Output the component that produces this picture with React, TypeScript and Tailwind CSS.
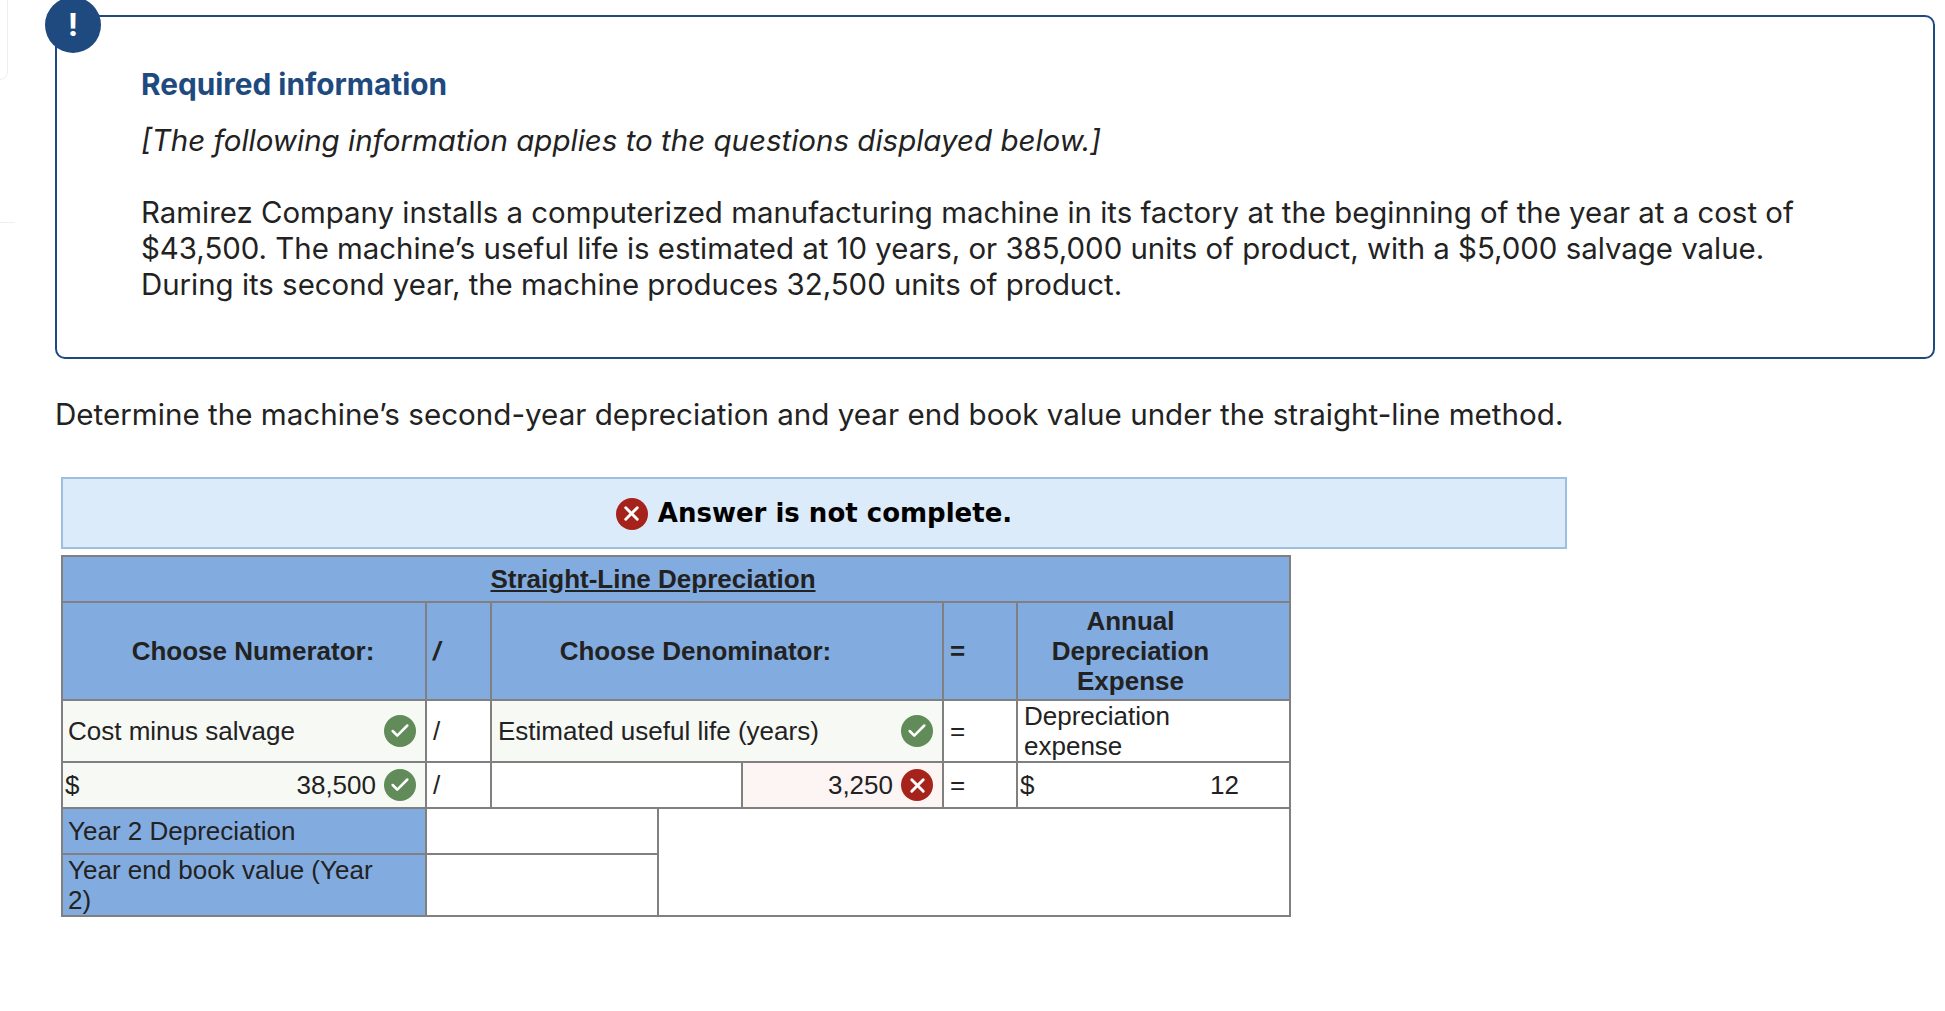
import { Check, X } from "lucide-react";

function Ok() {
  return (
    <span className="flex h-[32px] w-[32px] shrink-0 items-center justify-center rounded-full bg-[#618b58] text-white">
      <Check size={22} strokeWidth={2.75} />
    </span>
  );
}

function Bad() {
  return (
    <span className="flex h-[32px] w-[32px] shrink-0 items-center justify-center rounded-full bg-[#a6231b] text-white">
      <X size={23} strokeWidth={3} />
    </span>
  );
}

const cell = "border-2 border-[#808080] p-0 align-middle";
const blue = "bg-[#82abdf]";

export default function App() {
  return (
    <div className="relative h-[1011px] w-[1945px] overflow-hidden bg-white text-[#222] [font-family:Inter,sans-serif]">
      {/* bits of the page behind, cut off at the left edge */}
      <div className="absolute left-[-10px] top-[-10px] h-[90px] w-[18px] rounded-[8px] border border-[#eeeeee]" />
      <div className="absolute left-0 top-[222px] h-[1px] w-[15px] bg-[#eeeeee]" />

      <div className="pl-[55px] pt-[15px]">
        <div className="relative h-[344px] w-[1880px] rounded-[10px] border-2 border-[#1f4a80] pl-[84px] pt-[49px]">
          <div className="absolute left-[-12px] top-[-20px] flex h-[56px] w-[56px] items-center justify-center rounded-full bg-[#1f4a80] text-[31px] font-bold text-white">
            !
          </div>
          <h2 className="text-[29.8px] font-bold leading-[36px] text-[#1f4a80]">Required information</h2>
          <p className="mt-[20px] text-[29.5px] italic leading-[36px]">
            [The following information applies to the questions displayed below.]
          </p>
          <p className="mt-[37px] text-[29.4px] leading-[36px]">
            Ramirez Company installs a computerized manufacturing machine in its factory at the beginning of the year at a cost of
            <br />
            $43,500. The machine’s useful life is estimated at 10 years, or 385,000 units of product, with a $5,000 salvage value.
            <br />
            During its second year, the machine produces 32,500 units of product.
          </p>
        </div>

        <p className="mt-[37px] text-[29.6px] leading-[36px]">
          Determine the machine’s second-year depreciation and year end book value under the straight-line method.
        </p>

        <div className="ml-[6px] mt-[45px] w-[1506px] [font-family:'Liberation_Sans',Arial,sans-serif]">
          <div className="flex h-[72px] items-center justify-center gap-[10px] border-2 border-[#9dbfe0] bg-[#dcebf9] pt-[1px] text-[26px] font-bold text-black [font-family:'DejaVu_Sans',sans-serif]">
            <Bad />
            <span>Answer is not complete.</span>
          </div>

          <table className="mt-[6px] w-[1230px] table-fixed border-collapse text-[26px] leading-[30px] text-[#222]">
            <colgroup>
              <col className="w-[364px]" />
              <col className="w-[65px]" />
              <col className="w-[167px]" />
              <col className="w-[84px]" />
              <col className="w-[201px]" />
              <col className="w-[74px]" />
              <col />
            </colgroup>
            <tbody>
              <tr className={`h-[46px] ${blue}`}>
                <th colSpan={7} className={`${cell} text-center font-bold underline`}>
                  <span className="pr-[46px]">Straight-Line Depreciation</span>
                </th>
              </tr>
              <tr className={`h-[98px] ${blue} font-bold`}>
                <th className={`${cell} pl-[18px] text-center`}>Choose Numerator:</th>
                <th className={`${cell} pl-[6px] text-left italic`}>/</th>
                <th colSpan={3} className={`${cell} text-center`}>
                  <span className="pr-[43px]">Choose Denominator:</span>
                </th>
                <th className={`${cell} pl-[6px] text-left`}>=</th>
                <th className={`${cell} pr-[46px] text-center`}>
                  Annual
                  <br />
                  Depreciation
                  <br />
                  Expense
                </th>
              </tr>
              <tr className="h-[62px]">
                <td className={`${cell} bg-[#f7f9f5] pl-[5px] pr-[9px]`}>
                  <div className="flex items-center justify-between">
                    <span>Cost minus salvage</span>
                    <Ok />
                  </div>
                </td>
                <td className={`${cell} pl-[6px]`}>/</td>
                <td colSpan={3} className={`${cell} bg-[#f7f9f5] pl-[6px] pr-[9px]`}>
                  <div className="flex items-center justify-between">
                    <span>Estimated useful life (years)</span>
                    <Ok />
                  </div>
                </td>
                <td className={`${cell} pl-[6px]`}>=</td>
                <td className={`${cell} pl-[6px]`}>
                  Depreciation
                  <br />
                  expense
                </td>
              </tr>
              <tr className="h-[46px]">
                <td className={`${cell} bg-[#f7f9f5] pl-[2px] pr-[9px]`}>
                  <div className="flex items-center">
                    <span>$</span>
                    <span className="ml-auto mr-[8px]">38,500</span>
                    <Ok />
                  </div>
                </td>
                <td className={`${cell} pl-[6px]`}>/</td>
                <td colSpan={2} className={cell} />
                <td className={`${cell} bg-[#fdf4f4] pr-[9px]`}>
                  <div className="flex items-center justify-end gap-[8px]">
                    <span>3,250</span>
                    <Bad />
                  </div>
                </td>
                <td className={`${cell} pl-[6px]`}>=</td>
                <td className={`${cell} pl-[2px]`}>
                  <div className="flex items-center pr-[50px]">
                    <span>$</span>
                    <span className="ml-auto">12</span>
                  </div>
                </td>
              </tr>
              <tr className="h-[46px]">
                <td className={`${cell} ${blue} pl-[5px]`}>Year 2 Depreciation</td>
                <td colSpan={2} className={cell} />
                <td colSpan={4} rowSpan={2} className={cell} />
              </tr>
              <tr className="h-[62px]">
                <td className={`${cell} ${blue} pl-[5px]`}>
                  Year end book value (Year
                  <br />
                  2)
                </td>
                <td colSpan={2} className={cell} />
              </tr>
            </tbody>
          </table>
        </div>
      </div>
    </div>
  );
}
